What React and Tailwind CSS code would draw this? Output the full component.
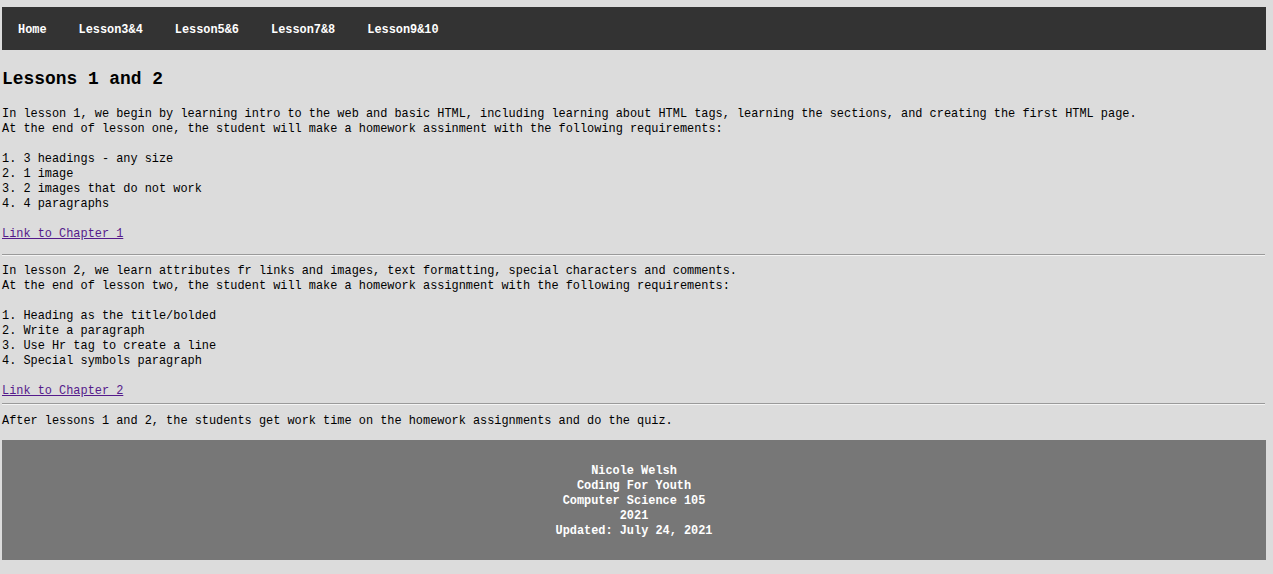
export default function App() {
  const navItems = ["Home", "Lesson3&4", "Lesson5&6", "Lesson7&8", "Lesson9&10"];
  const font = { fontFamily: '"Liberation Mono", "DejaVu Sans Mono", monospace' };
  return (
    <div className="min-h-[574px] bg-[#dcdcdc] pt-[7px] pl-[2px] text-[11.9px] leading-[15px] text-black" style={font}>
      <div className="flex h-[43px] w-[1264px] items-center bg-[#333333] pt-[3px]">
        {navItems.map((n) => (
          <span key={n} className="px-[16px] font-bold text-white">{n}</span>
        ))}
      </div>
      <h1 className="mt-[17px] text-[17.9px] font-bold leading-[24px]">Lessons 1 and 2</h1>
      <div className="mt-[16px]">
        <div>In lesson 1, we begin by learning intro to the web and basic HTML, including learning about HTML tags, learning the sections, and creating the first HTML page.</div>
        <div>At the end of lesson one, the student will make a homework assinment with the following requirements:</div>
        <div className="h-[15px]"></div>
        <div>1. 3 headings - any size</div>
        <div>2. 1 image</div>
        <div>3. 2 images that do not work</div>
        <div>4. 4 paragraphs</div>
        <div className="h-[15px]"></div>
        <div><a href="#" className="text-[#551a8b] underline">Link to Chapter 1</a></div>
      </div>
      <div className="mt-[12px] w-[1263px] border-t border-b border-t-[#9a9a9a] border-b-[#f4f4f4]"></div>
      <div className="mt-[8px]">
        <div>In lesson 2, we learn attributes fr links and images, text formatting, special characters and comments.</div>
        <div>At the end of lesson two, the student will make a homework assignment with the following requirements:</div>
        <div className="h-[15px]"></div>
        <div>1. Heading as the title/bolded</div>
        <div>2. Write a paragraph</div>
        <div>3. Use Hr tag to create a line</div>
        <div>4. Special symbols paragraph</div>
        <div className="h-[15px]"></div>
        <div><a href="#" className="text-[#551a8b] underline">Link to Chapter 2</a></div>
      </div>
      <div className="mt-[4px] w-[1263px] border-t border-b border-t-[#9a9a9a] border-b-[#f4f4f4]"></div>
      <div className="mt-[9px]">After lessons 1 and 2, the students get work time on the homework assignments and do the quiz.</div>
      <div className="mt-[11px] flex h-[120px] w-[1264px] flex-col items-center justify-center bg-[#777777] pt-[2px] font-bold text-white">
        <div>Nicole Welsh</div>
        <div>Coding For Youth</div>
        <div>Computer Science 105</div>
        <div>2021</div>
        <div>Updated: July 24, 2021</div>
      </div>
    </div>
  );
}
